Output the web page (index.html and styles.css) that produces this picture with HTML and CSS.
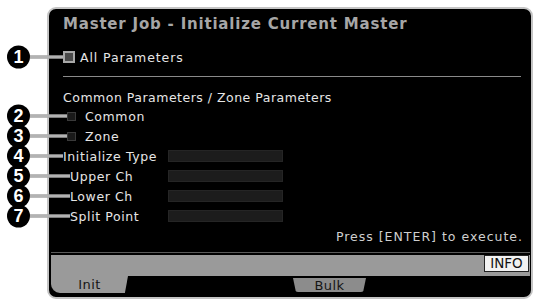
FILE: index.html
```html
<!DOCTYPE html>
<html lang="en">
<head>
  <meta charset="UTF-8">
  <meta name="viewport" content="width=device-width, initial-scale=1.0">
  <title>Master Job - Initialize Current Master</title>
  <link rel="stylesheet" href="styles.css">
</head>
<body>
  <div class="screen">
    <div class="content">
      <div class="title">Master Job - Initialize Current Master</div>

      <div class="row all" style="--reach: 0px">
        <span class="mark"><span class="num">1</span><span class="line"></span></span>
        <span class="check on"></span>
        <span class="label">All Parameters</span>
      </div>

      <hr class="rule">

      <div class="row header">Common Parameters / Zone Parameters</div>

      <div class="row opt" style="--reach: 4px">
        <span class="mark"><span class="num">2</span><span class="line"></span></span>
        <span class="check"></span>
        <span class="label">Common</span>
      </div>
      <div class="row opt" style="--reach: 4px">
        <span class="mark"><span class="num">3</span><span class="line"></span></span>
        <span class="check"></span>
        <span class="label">Zone</span>
      </div>

      <div class="row field" style="--reach: 0px">
        <span class="mark"><span class="num">4</span><span class="line"></span></span>
        <span class="name">Initialize Type</span>
        <span class="box"></span>
      </div>
      <div class="row field" style="--reach: 7px">
        <span class="mark"><span class="num">5</span><span class="line"></span></span>
        <span class="name sub">Upper Ch</span>
        <span class="box"></span>
      </div>
      <div class="row field" style="--reach: 7px">
        <span class="mark"><span class="num">6</span><span class="line"></span></span>
        <span class="name sub">Lower Ch</span>
        <span class="box"></span>
      </div>
      <div class="row field" style="--reach: 7px">
        <span class="mark"><span class="num">7</span><span class="line"></span></span>
        <span class="name sub">Split Point</span>
        <span class="box"></span>
      </div>

      <div class="hint">Press [ENTER] to execute.</div>
    </div>

    <div class="footer">
      <div class="bar"><span class="info">INFO</span></div>
      <div class="tabs">
        <span class="tab active">Init</span>
        <span class="tab">Bulk</span>
      </div>
    </div>
  </div>
</body>
</html>
```

FILE: styles.css
```css
html, body {
  margin: 0;
  background-color: #ffffff;
}

body {
  width: 537px;
  height: 304px;
  overflow: hidden;
  font-family: "DejaVu Sans", Verdana, sans-serif;
}

.screen {
  box-sizing: border-box;
  width: 486px;
  height: 292px;
  margin: 7px 0 0 47px;
  background-color: #000;
  border: 2px solid #c4c4c4;
  border-radius: 9px;
  display: flex;
  flex-direction: column;
}

.content {
  padding: 0 8px 0 14px;
  color: #e6e6e6;
  font-size: 12.5px;
  letter-spacing: 0.6px;
}

.title {
  height: 29px;
  line-height: 30px;
  font-size: 15px;
  font-weight: bold;
  letter-spacing: 0.8px;
  color: #a6a6a6;
}

.row {
  position: relative;
  display: flex;
  align-items: center;
  height: 20px;
}

.all {
  margin-top: 9px;
}

.all .label {
  margin-left: 5px;
  letter-spacing: 0.9px;
}

.rule {
  margin: 9px 2px 0 0;
  border: none;
  border-top: 1px solid #8a8a8a;
}

.header {
  margin-top: 11px;
  height: 18px;
  letter-spacing: 0.5px;
}

.check {
  box-sizing: border-box;
  width: 9px;
  height: 9px;
  margin-left: 4px;
  background-color: #1a1a1a;
  border: 1px solid #3a3a3a;
}

.check.on {
  width: 12px;
  height: 12px;
  margin-left: 0;
  border: 2px solid #a8a8a8;
  background-color: #4a4a4a;
}

.opt .label {
  margin-left: 9px;
}

.name {
  width: 105px;
}

.name.sub {
  padding-left: 7px;
  width: 98px;
}

.box {
  box-sizing: border-box;
  width: 115px;
  height: 12px;
  background-color: #1c1c1c;
  border: 1px solid #252525;
}

.hint {
  height: 20px;
  line-height: 21px;
  text-align: right;
  color: #cfcfcf;
  letter-spacing: 1px;
}

/* callouts */
.mark {
  position: absolute;
  left: -56px;
  top: 50%;
  transform: translateY(-50%);
  width: calc(56px + var(--reach));
  display: flex;
  align-items: center;
}

.num {
  flex: none;
  width: 23px;
  height: 23px;
  border-radius: 50%;
  background-color: #000;
  color: #fff;
  font-family: "Liberation Sans", Arial, sans-serif;
  font-weight: bold;
  font-size: 18px;
  letter-spacing: 0;
  line-height: 23px;
  text-align: center;
  position: relative;
  z-index: 1;
}

.line {
  flex: 1;
  height: 1px;
  background-color: #d8d8d8;
  border-top: 1px solid #8c8c8c;
  border-bottom: 1px solid #8c8c8c;
}

/* bottom */
.footer {
  margin-top: auto;
  margin-bottom: 4px;
  padding: 0 1px 0 2px;
}

.bar {
  height: 21px;
  border-top: 1px solid #5a5a5a;
  padding-top: 2px;
  background-clip: content-box;
  background-color: #9a9a9a;
  display: flex;
  justify-content: flex-end;
  align-items: flex-start;
}

.info {
  box-sizing: border-box;
  height: 17px;
  width: 45px;
  margin-right: 1px;
  background-color: #f2f2f2;
  border: 1px solid #222;
  color: #111;
  font-size: 13.5px;
  line-height: 15px;
  text-align: center;
  letter-spacing: 0;
}

.tabs {
  display: flex;
  align-items: flex-start;
  height: 17px;
}

.tab {
  display: flex;
  justify-content: center;
  align-items: center;
  color: #151515;
  font-size: 13px;
  letter-spacing: 0.4px;
  background-color: #8c8c8c;
  width: 73px;
  height: 14px;
  margin: 2px 0 0 165px;
  border-radius: 0 0 5px 5px;
  clip-path: polygon(0 0, 100% 0, 96% 100%, 4% 100%);
}

.tab.active {
  background-color: #9a9a9a;
  width: 77px;
  height: 17px;
  margin: 0;
  border-radius: 0 0 3px 9px;
  clip-path: polygon(0 0, 100% 0, 96% 100%, 0 100%);
}
```
